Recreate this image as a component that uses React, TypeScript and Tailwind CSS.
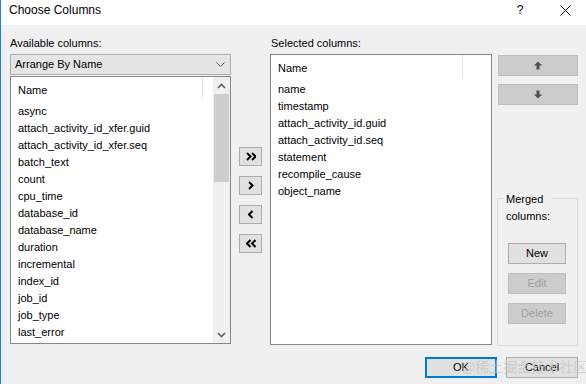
import React from 'react';

const availableColumns = [
  'async',
  'attach_activity_id_xfer.guid',
  'attach_activity_id_xfer.seq',
  'batch_text',
  'count',
  'cpu_time',
  'database_id',
  'database_name',
  'duration',
  'incremental',
  'index_id',
  'job_id',
  'job_type',
  'last_error',
];

const selectedColumns = [
  'name',
  'timestamp',
  'attach_activity_id.guid',
  'attach_activity_id.seq',
  'statement',
  'recompile_cause',
  'object_name',
];

const Chevron: React.FC<{ dir: 'left' | 'right'; double?: boolean }> = ({ dir, double }) => {
  const d = dir === 'right' ? 'M1 1l3.5 3.5L1 8' : 'M4.5 1L1 4.5 4.5 8';
  return (
    <svg width={double ? 10 : 6} height="9" viewBox={double ? '0 0 10 9' : '0 0 6 9'}>
      <path d={d} stroke="#000" strokeWidth="2" fill="none" />
      {double && <path d={d} transform="translate(5 0)" stroke="#000" strokeWidth="2" fill="none" />}
    </svg>
  );
};

const MoveButton: React.FC<{ children: React.ReactNode }> = ({ children }) => (
  <button className="w-[23px] h-[19px] bg-[#e1e1e1] border border-[#adadad] flex items-center justify-center">
    {children}
  </button>
);

const SmallArrow: React.FC<{ up?: boolean }> = ({ up }) => (
  <svg width="8" height="9" viewBox="0 0 8 9" className={up ? '' : 'rotate-180'}>
    <path d="M4 0.5L8 4.5H5.5V8.5H2.5V4.5H0Z" fill="#505050" />
  </svg>
);

const ScrollChevron: React.FC<{ up?: boolean }> = ({ up }) => (
  <svg width="9" height="6" viewBox="0 0 9 6">
    <path d={up ? 'M1 5l3.5-3.5L8 5' : 'M1 1l3.5 3.5L8 1'} stroke="#606060" strokeWidth="1.6" fill="none" />
  </svg>
);

const DialogButton: React.FC<{ label: string; primary?: boolean; disabled?: boolean; className?: string }> = ({
  label,
  primary,
  disabled,
  className = '',
}) => (
  <button
    className={`h-[21px] flex items-center justify-center ${
      primary
        ? 'border-2 border-[#0078d7] bg-[#e1e1e1] text-black'
        : disabled
        ? 'border border-[#bfbfbf] bg-[#cccccc] text-[#a0a0a0]'
        : 'border border-[#adadad] bg-[#e1e1e1] text-black'
    } ${className}`}
  >
    {label}
  </button>
);

export default function App() {
  return (
    <div className="relative w-[586px] h-[384px] flex flex-col bg-[#f0f0f0] border-l border-[#1883d7] text-[11px] text-black font-['Liberation_Sans',Arial,sans-serif] overflow-hidden">
      {/* title bar */}
      <div className="h-[25px] bg-white flex items-start pt-[3px] pl-[8px] text-[12px] leading-[15px]">
        <span className="flex-1">Choose Columns</span>
        <span className="w-[8px] mr-[36px] text-center">?</span>
        <svg width="11" height="11" viewBox="0 0 11 11" className="mt-[2px] mr-[15px]">
          <path d="M0.5 0.5l10 10M10.5 0.5l-10 10" stroke="#000" strokeWidth="1" />
        </svg>
      </div>

      <div className="flex items-start h-[321px]">
        {/* available */}
        <div className="ml-[9px] w-[221px] pt-[11px] flex flex-col">
          <div className="leading-[14px]">Available columns:</div>
          <div className="mt-[4px] h-[21px] bg-[#e5e5e5] border border-[#adadad] flex items-center pl-[4px] pr-[5px]">
            <span className="flex-1">Arrange By Name</span>
            <svg width="9" height="5" viewBox="0 0 9 5">
              <path d="M0.5 0.5l4 4 4-4" stroke="#555" strokeWidth="1" fill="none" />
            </svg>
          </div>
          <div className="mt-px h-[268px] bg-white border border-[#828790] flex overflow-hidden">
            <div className="flex-1 flex flex-col">
              <div className="h-[26px] flex items-center">
                <span className="flex-1 pl-[7px]">Name</span>
                <div className="w-px h-[23px] bg-[#e5e5e5] self-start" />
                <div className="w-[10px]" />
              </div>
              {availableColumns.map((c) => (
                <div key={c} className="h-[17px] leading-[17px] pl-[7px] whitespace-nowrap">
                  {c}
                </div>
              ))}
            </div>
            <div className="w-[17px] bg-[#f0f0f0] flex flex-col">
              <div className="h-[17px] flex items-center justify-center">
                <ScrollChevron up />
              </div>
              <div className="h-[88px] mx-px bg-[#cdcdcd]" />
              <div className="flex-1" />
              <div className="h-[17px] flex items-center justify-center">
                <ScrollChevron />
              </div>
            </div>
          </div>
        </div>

        {/* move buttons */}
        <div className="w-[39px] pl-[8px] pt-[122px] flex flex-col gap-[10px]">
          <MoveButton>
            <Chevron dir="right" double />
          </MoveButton>
          <MoveButton>
            <Chevron dir="right" />
          </MoveButton>
          <MoveButton>
            <Chevron dir="left" />
          </MoveButton>
          <MoveButton>
            <Chevron dir="left" double />
          </MoveButton>
        </div>

        {/* selected */}
        <div className="w-[222px] pt-[11px] flex flex-col">
          <div className="leading-[14px] pl-px">Selected columns:</div>
          <div className="mt-[4px] h-[291px] bg-white border border-[#828790] flex flex-col overflow-hidden">
            <div className="h-[26px] flex items-center">
              <span className="flex-1 pl-[7px]">Name</span>
              <div className="w-px h-[24px] bg-[#e5e5e5] self-start" />
              <div className="w-[28px]" />
            </div>
            {selectedColumns.map((c) => (
              <div key={c} className="h-[17px] leading-[17px] pl-[7px] whitespace-nowrap">
                {c}
              </div>
            ))}
          </div>
        </div>

        {/* order + merged */}
        <div className="flex-1 pt-[30px] flex flex-col">
          <button className="ml-[6px] w-[80px] h-[21px] bg-[#cccccc] border border-[#bfbfbf] flex items-center justify-center">
            <SmallArrow up />
          </button>
          <button className="ml-[6px] mt-[8px] w-[80px] h-[21px] bg-[#cccccc] border border-[#bfbfbf] flex items-center justify-center">
            <SmallArrow />
          </button>
          <div className="relative ml-[5px] mt-[93px] w-[81px] h-[148px] border border-[#dcdcdc] rounded-[2px] pl-[10px] pt-[44px] flex flex-col gap-[9px]">
            <span className="absolute left-[6px] -top-[8px] px-[2px] bg-[#f0f0f0] leading-[17px]">
              Merged
              <br />
              columns:
            </span>
            <DialogButton label="New" className="w-[58px]" />
            <DialogButton label="Edit" disabled className="w-[58px]" />
            <DialogButton label="Delete" disabled className="w-[58px]" />
          </div>
        </div>
      </div>

      <div className="mt-[11px] flex justify-end gap-[9px] pr-[8px]">
        <DialogButton label="OK" primary className="w-[72px]" />
        <DialogButton label="Cancel" className="w-[72px]" />
      </div>

      <span className="absolute left-[461px] top-[358px] text-[14px] leading-[16px] text-[#c4c4c4]/70 font-['Noto_Sans_CJK_SC',sans-serif] whitespace-nowrap pointer-events-none">
        @稀土掘金技术社区
      </span>
    </div>
  );
}
